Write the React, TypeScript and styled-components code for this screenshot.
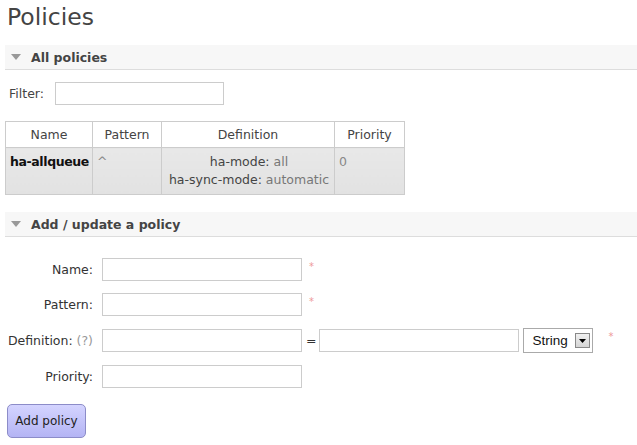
import React from "react";
import styled, { createGlobalStyle } from "styled-components";

const Global = createGlobalStyle`
  html, body { margin: 0; padding: 0; background: #fff; }
  body { font-family: "DejaVu Sans", Verdana, sans-serif; font-size: 12.5px; color: #444; }
`;

const Page = styled.div`
  padding: 0 0 0 5px;
`;

const Title = styled.h1`
  margin: 0 0 0 2px;
  padding-top: 2px;
  font-size: 23.5px;
  line-height: 31px;
  font-weight: normal;
  color: #444;
`;

const SectionHeader = styled.h2<{ $top: number }>`
  margin: ${(p) => p.$top}px 0 0 0;
  height: 24px;
  display: flex;
  align-items: center;
  gap: 10px;
  padding-left: 6px;
  background: #f7f7f7;
  border-bottom: 1px solid #ddd;
  font-size: 12.5px;
  font-weight: bold;
  color: #444;
`;

const Triangle = styled.span`
  width: 0;
  height: 0;
  border-left: 5px solid transparent;
  border-right: 5px solid transparent;
  border-top: 6px solid #999;
`;

const FilterRow = styled.div`
  display: flex;
  align-items: center;
  gap: 11px;
  margin: 12px 0 0 4px;
`;

const TextInput = styled.input<{ $w: number }>`
  box-sizing: border-box;
  width: ${(p) => p.$w}px;
  height: 23px;
  margin: 0;
  border: 1px solid #ccc;
  background: #fff;
  font: inherit;
  padding: 2px 4px;
`;

const Table = styled.table`
  margin-top: 16px;
  border-collapse: collapse;
  border: 1px solid #ccc;
  table-layout: fixed;
  width: 399px;
`;

const Th = styled.th<{ $w: number }>`
  width: ${(p) => p.$w}px;
  box-sizing: border-box;
  height: 26px;
  padding: 0 2px;
  border: 1px solid #ccc;
  font-weight: normal;
  text-align: center;
  color: #444;
  background: #fff;
`;

const Td = styled.td<{ $center?: boolean; $strong?: boolean; $muted?: boolean }>`
  padding: 5px 2px 5px 4px;
  height: 46px;
  box-sizing: border-box;
  border: 1px solid #ccc;
  vertical-align: top;
  line-height: 18px;
  white-space: nowrap;
  overflow: hidden;
  background: linear-gradient(#e8e8e8, #e2e2e2);
  text-align: ${(p) => (p.$center ? "center" : "left")};
  font-weight: ${(p) => (p.$strong ? "bold" : "normal")};
  letter-spacing: ${(p) => (p.$strong ? "-0.4px" : "normal")};
  color: ${(p) => (p.$strong ? "#111" : p.$muted ? "#888" : "#444")};
`;

const DefLine = styled.div`
  white-space: nowrap;
`;

const DefValue = styled.span`
  color: #777;
`;

const Form = styled.div`
  display: grid;
  grid-template-columns: 88px auto;
  column-gap: 9px;
  row-gap: 12px;
  align-items: center;
  margin-top: 21px;
`;

const Label = styled.label`
  text-align: right;
  color: #333;
  white-space: nowrap;
`;

const Hint = styled.span`
  color: #999;
`;

const Field = styled.div`
  display: flex;
  align-items: center;
`;

const Required = styled.span<{ $gap: number }>`
  align-self: flex-start;
  margin-left: ${(p) => p.$gap}px;
  margin-top: 3px;
  color: #e99;
  font-size: 10px;
  line-height: 12px;
`;

const Equals = styled.span`
  margin: 0 3px 0 4px;
  color: #333;
`;

const SelectBox = styled.div`
  box-sizing: border-box;
  margin-left: 4px;
  width: 70px;
  height: 25px;
  border: 1px solid #aaa;
  background: #fff;
  display: flex;
  align-items: center;
  justify-content: space-between;
  padding: 0 1px 0 8px;
  font-family: "Liberation Sans", Arial, sans-serif;
  font-size: 13.5px;
  color: #111;
`;

const ArrowBox = styled.span`
  box-sizing: border-box;
  width: 15px;
  height: 15px;
  border: 1px solid #888;
  background: linear-gradient(#f0f0f0, #d4d4d4);
  display: flex;
  align-items: center;
  justify-content: center;
  margin-right: 1px;
`;

const Button = styled.button`
  margin: 16px 0 0 2px;
  box-sizing: border-box;
  width: 79px;
  height: 34px;
  border: 1px solid #8c8cc8;
  border-radius: 5px;
  background: linear-gradient(#d4d4ff, #b4b4f4);
  font-family: "DejaVu Sans", Verdana, sans-serif;
  font-size: 12px;
  color: #222;
  padding: 0;
`;

export default function App() {
  return (
    <>
      <Global />
      <Page>
        <Title>Policies</Title>
        <SectionHeader $top={12}>
          <Triangle />
          All policies
        </SectionHeader>
        <FilterRow>
          <span>Filter:</span>
          <TextInput $w={169} />
        </FilterRow>
        <Table>
          <thead>
            <tr>
              <Th $w={87}>Name</Th>
              <Th $w={69}>Pattern</Th>
              <Th $w={173}>Definition</Th>
              <Th $w={70}>Priority</Th>
            </tr>
          </thead>
          <tbody>
            <tr>
              <Td $strong>ha-allqueue</Td>
              <Td $muted>^</Td>
              <Td $center>
                <DefLine>
                  ha-mode: <DefValue>all</DefValue>
                </DefLine>
                <DefLine>
                  ha-sync-mode: <DefValue>automatic</DefValue>
                </DefLine>
              </Td>
              <Td $muted>0</Td>
            </tr>
          </tbody>
        </Table>
        <SectionHeader $top={17}>
          <Triangle />
          Add / update a policy
        </SectionHeader>
        <Form>
          <Label>Name:</Label>
          <Field>
            <TextInput $w={200} />
            <Required $gap={7}>*</Required>
          </Field>
          <Label>Pattern:</Label>
          <Field>
            <TextInput $w={200} />
            <Required $gap={7}>*</Required>
          </Field>
          <Label>
            Definition: <Hint>(?)</Hint>
          </Label>
          <Field>
            <TextInput $w={200} />
            <Equals>=</Equals>
            <TextInput $w={200} />
            <SelectBox>
              String
              <ArrowBox>
                <svg width="7" height="4" viewBox="0 0 7 4">
                  <path d="M0 0h7L3.5 4z" fill="#000" />
                </svg>
              </ArrowBox>
            </SelectBox>
            <Required $gap={15}>*</Required>
          </Field>
          <Label>Priority:</Label>
          <Field>
            <TextInput $w={200} />
          </Field>
        </Form>
        <Button>Add policy</Button>
      </Page>
    </>
  );
}
